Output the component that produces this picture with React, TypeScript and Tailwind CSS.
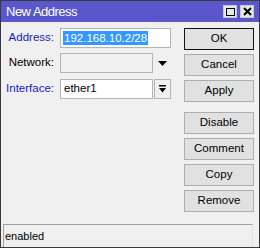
import React from "react";

const font = { fontFamily: '"Liberation Sans", Arial, sans-serif' };

function Btn({ label, focus }: { label: string; focus?: boolean }) {
  return (
    <div
      className={`h-[22px] w-[70px] flex items-center justify-center text-[11.5px] text-black bg-[#e1e1e1] border ${
        focus ? "border-[#111111]" : "border-[#adadad]"
      }`}
    >
      {label}
    </div>
  );
}

export default function App() {
  return (
    <div
      style={font}
      className="w-[260px] h-[248px] border border-[#3a3a3a] bg-[#f0f0f0] flex flex-col overflow-hidden"
    >
      {/* title bar */}
      <div className="h-[21px] bg-[#5a56cc] flex items-center justify-between pl-[5px] pr-[5px] shrink-0">
        <span className="text-white text-[13px] tracking-[-0.5px] leading-none">New Address</span>
        <div className="flex gap-[3px] items-center">
          <div className="w-[14px] h-[13px] bg-[#e6e6e6] border border-[#c8c8c8] flex items-center justify-center">
            <div className="w-[9px] h-[8px] border-[1.5px] border-black" />
          </div>
          <div className="w-[14px] h-[13px] bg-[#e6e6e6] border border-[#c8c8c8] flex items-center justify-center">
            <svg width="9" height="9" viewBox="0 0 9 9">
              <path d="M1 1 L8 8 M8 1 L1 8" stroke="black" strokeWidth="2" />
            </svg>
          </div>
        </div>
      </div>

      {/* body */}
      <div className="flex-1 flex">
        <div className="flex flex-col gap-[5px] pt-[6px] w-[182px] text-[11.5px]">
          <div className="flex items-center h-[20px]">
            <div className="w-[53px] text-right text-[#1818cc]">Address:</div>
            <div className="ml-[6px] w-[111px] h-[20px] bg-white border border-[#b4b4b4] flex items-center pl-[2px]">
              <span className="bg-[#3399ff] text-white leading-[14px] px-[1px]">192.168.10.2/28</span>
            </div>
          </div>
          <div className="flex items-center h-[20px]">
            <div className="w-[53px] text-right text-black">Network:</div>
            <div className="ml-[6px] w-[93px] h-[20px] bg-[#f0f0f0] border border-[#b4b4b4]" />
            <div className="w-[18px] flex justify-center">
              <svg width="9" height="5" viewBox="0 0 9 5">
                <path d="M0 0 L9 0 L4.5 5 Z" fill="black" />
              </svg>
            </div>
          </div>
          <div className="flex items-center h-[20px] mt-px">
            <div className="w-[53px] text-right text-[#1818cc]">Interface:</div>
            <div className="ml-[6px] w-[93px] h-[20px] bg-white border border-[#b4b4b4] flex items-center pl-[3px] text-black">
              ether1
            </div>
            <div className="ml-[1px] w-[17px] h-[20px] bg-[#f0f0f0] border border-[#b4b4b4] flex items-center justify-center">
              <svg width="7" height="8" viewBox="0 0 7 8">
                <rect x="0" y="0" width="7" height="1.5" fill="black" />
                <path d="M0 3 L7 3 L3.5 7.5 Z" fill="black" />
              </svg>
            </div>
          </div>
        </div>

        <div className="flex flex-col pt-[6px] ml-[1px]">
          <div className="flex flex-col gap-[4px]">
            <Btn label="OK" focus />
            <Btn label="Cancel" />
            <Btn label="Apply" />
          </div>
          <div className="flex flex-col gap-[4px] mt-[10px]">
            <Btn label="Disable" />
            <Btn label="Comment" />
            <Btn label="Copy" />
            <Btn label="Remove" />
          </div>
        </div>
      </div>

      {/* status bar */}
      <div className="h-[23px] shrink-0 ml-[2px] mr-[6px] border-t border-l border-r border-t-[#a0a0a0] border-l-[#a0a0a0] border-r-[#e2e2e2] flex items-center pl-[1px] text-[11px] text-black">
        enabled
      </div>
    </div>
  );
}
